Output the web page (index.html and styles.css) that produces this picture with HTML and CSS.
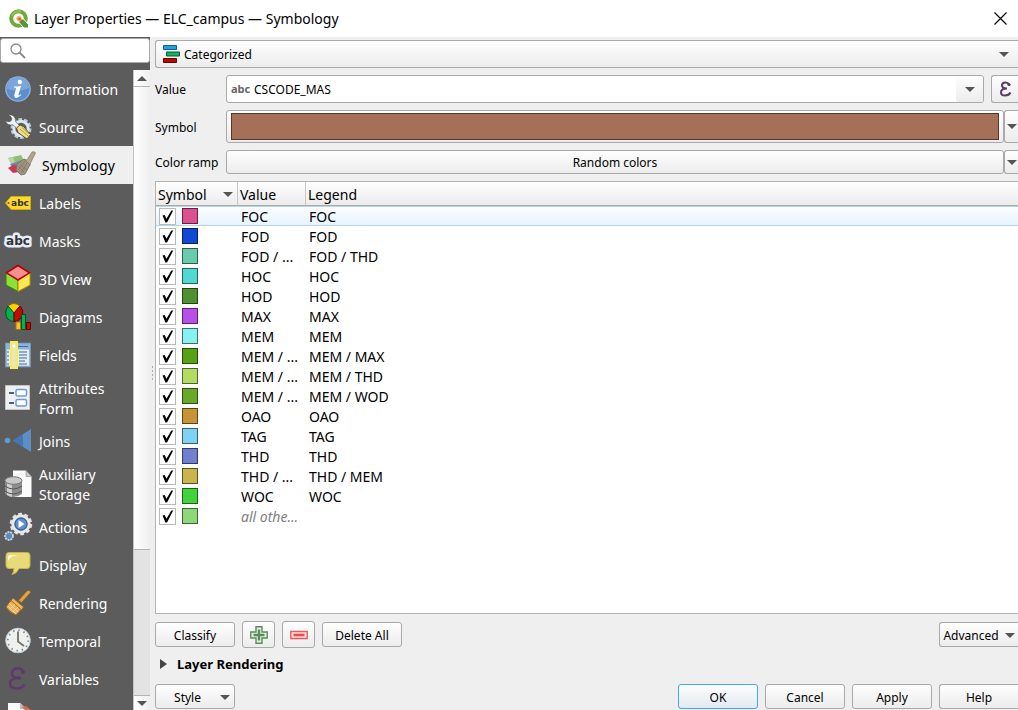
FILE: index.html
```html
<!DOCTYPE html>
<html lang="en">
<head>
<meta charset="utf-8">
<title>Layer Properties — ELC_campus — Symbology</title>
<link rel="stylesheet" href="styles.css">
</head>
<body class="dialog">
<header class="titlebar">
  <svg class="logo" viewBox="0 0 20 20" width="20" height="20" aria-hidden="true">
    <circle cx="9.500" cy="9.500" r="7.300" fill="none" stroke="#74a83c" stroke-width="4"/>
    <path d="M3 7A7.300 7.300 0 0 1 12 2.500" fill="none" stroke="#93c254" stroke-width="2"/>
    <path d="M10 10h4.500l5 5.500v3.500h-4.500L10 13.500z" fill="#589632" stroke="#fff"/>
    <circle cx="10" cy="9.500" r="2.600" fill="#f5a968"/><circle cx="10.500" cy="10" r="1.300" fill="#e8541c"/>
  </svg>
  <h1 class="title">Layer Properties — ELC_campus — Symbology</h1>
  <button class="close" aria-label="Close"><svg viewBox="0 0 13 13" width="13" height="13"><path d="M.5.5l12 12M12.500.5l-12 12" stroke="#000" stroke-width="1.200"/></svg></button>
</header>
<div class="content">
  <aside class="sidebar">
    <label class="search">
      <svg viewBox="0 0 16 16" width="16" height="16" aria-hidden="true"><circle cx="6" cy="6" r="5" fill="none" stroke="#888" stroke-width="1.300"/><path d="M9.500 9.500l5.500 5.500" stroke="#888" stroke-width="1.800"/></svg>
      <input type="text" aria-label="Search">
    </label>
    <div class="pages">
      <nav class="nav">
        <a class="item" href="#information"><svg class="icon" viewBox="0 0 26 26"><circle cx="13" cy="13" r="12.800" fill="#8db3e0"/><circle cx="13" cy="13" r="11.500" fill="#5b8fce"/><path d="M2 13a11 11 0 0 1 22-1q-10 5-22 1" fill="#7ba6da"/><circle cx="14.800" cy="6" r="2.200" fill="#fff"/><path d="M9 10.500q3.500.3 7-.8l-2.500 9q-.3 1.600 2.200-.5l.6.8q-6 5.500-7.200.8l2-7.300q.2-1-2.100-1z" fill="#fff"/></svg><span>Information</span></a>
        <a class="item" href="#source"><svg class="icon" viewBox="0 0 26 26"><circle cx="16" cy="14.500" r="9" fill="none" stroke="#b4cbe4" stroke-width="3" stroke-dasharray="3.600 2.050"/><circle cx="16" cy="14.500" r="7.200" fill="#5c5c5c" stroke="#dbe7f3" stroke-width="3"/><path d="M3 .8Q10.500-.3 10.800 8l5.200 5-2.800 2.800L8 10.800Q2 12 .3 6.500q2.200 1.700 4.700 1 2-.8 1.800-3Q6 2 3 .8z" fill="#f3f3f3" stroke="#4c4c4c" stroke-width=".6"/><path d="M11.500 14l3.500-3 3.500 1.500 7 8-3.500 4.500-9-6.500z" fill="#f0dc86" stroke="#5e5128"/><path d="M15 15l8 7M17 13.500l7 6.500" stroke="#b39a47"/></svg><span>Source</span></a>
        <a class="item selected" href="#symbology" aria-current="page"><svg class="icon" viewBox="0 0 26 26"><path d="M0 6l13-3 4 7-12 4z" fill="#8cc076"/><path d="M0 6l5-1 3 8-4 1z" fill="#b0d8a0"/><path d="M2 12l12-4 2 6-10 5z" fill="#7d87b4"/><path d="M0 16l7-4 4 8-6 1z" fill="#cb3a55"/><path d="M9 12l7-5 6 6-5 9-4 1-5-5z" fill="#9f9480" stroke="#736a58" stroke-width=".8"/><path d="M10 14l6 6M12 12l7 6M10 18l7-9M13 21l6-10" stroke="#766c59" stroke-width=".6"/><path d="M16 7l3 1 5-8q3-1 3.500 1L23 10l-1 3z" fill="#b3a58b" stroke="#857963" stroke-width=".7"/></svg><span>Symbology</span></a>
        <a class="item" href="#labels"><svg class="icon" viewBox="0 0 26 26"><path d="M6 6.500h19.500v13H6L.5 13z" fill="#fcd92b" stroke="#d2aa0a"/><circle cx="3.500" cy="13" r="1" fill="#6c5a0c"/><text class="abc" x="15" y="16" font-size="9">abc</text></svg><span>Labels</span></a>
        <a class="item" href="#masks"><svg class="icon" viewBox="0 0 26 26"><text class="abc halo" x="13" y="17" font-size="12">abc</text></svg><span>Masks</span></a>
        <a class="item" href="#view3d"><svg class="icon" viewBox="0 0 26 26"><path d="M1 7l12 6v12.500L1 19z" fill="#8ae234" stroke="#3a7d0b"/><path d="M25 7l-12 6v12.500L25 19z" fill="#fce94f" stroke="#b29500"/><path d="M13-.5l11.500 7.300L13 14 1.500 6.800z" fill="#f69090" stroke="#b60000" stroke-width="1.500"/></svg><span>3D View</span></a>
        <a class="item" href="#diagrams"><svg class="icon" viewBox="0 0 26 26"><path d="M9 9L3 2Q9-3 15 2z" fill="#fcd000" stroke="#9a7100"/><path d="M9 9v8.500Q1 17 .7 9 1 5 3 2z" fill="#00b050" stroke="#00502a"/><path d="M9 9l6-7q5 6 1 12-3 3.500-7 3.500z" fill="#c00d00" stroke="#680000"/><path d="M11 18h4.500v7.500H11z" fill="#fcc22b" stroke="#a67300"/><path d="M16.500 10.500h4v15h-4z" fill="#00b258" stroke="#00502a"/><path d="M21.500 18.500h4v7h-4z" fill="#c00d00" stroke="#680000"/></svg><span>Diagrams</span></a>
        <a class="item" href="#fields"><svg class="icon" viewBox="0 0 26 26"><path d="M1 1.500h24v23H1z" fill="#e4edf5" stroke="#7fa5ca" stroke-width="1.500"/><path d="M1 2h24v5.500H1z" fill="#8bb4dc"/><path d="M13 4.500h10" stroke="#3e6fa4"/><path d="M2 10h2M2 14h2M2 18h2M2 22h2M14 10h8M14 13h8M14 16h8M14 19h6M14 22h8" stroke="#7896b5" stroke-width="1.400"/><path d="M6 0h6v26H6z" fill="#ebe5b8" stroke="#f7ee55" stroke-width="2"/><circle cx="9" cy="4" r="1.500" fill="#fff"/></svg><span>Fields</span></a>
        <a class="item tall" href="#form"><svg class="icon" viewBox="0 0 26 26"><path d="M.5.5h24v24H.5z" fill="#f0f0f0" stroke="#c4c4c4"/><rect x="11" y="4.500" width="10.500" height="6.500" rx="1.500" fill="#fff" stroke="#6d9cd2" stroke-width="1.500"/><rect x="11" y="14.500" width="10.500" height="6.500" rx="1.500" fill="#fff" stroke="#6d9cd2" stroke-width="1.500"/><path d="M4 8h5M4 18h5" stroke="#45607e" stroke-width="2"/></svg><span>Attributes Form</span></a>
        <a class="item" href="#joins"><svg class="icon" viewBox="0 0 26 26"><path d="M8 12.500L26 1v23z" fill="#5d8fc6"/><path d="M8 12.500L18 6v13z" fill="#4377af"/><circle cx="2.500" cy="12.500" r="2.800" fill="#6398d0"/></svg><span>Joins</span></a>
        <a class="item tall" href="#storage"><svg class="icon" viewBox="0 0 26 26"><path d="M8-.5h13l5.500 6V26H8z" fill="#fafafa"/><path d="M21-.5v6h5.500z" fill="#ccc" stroke="#777" stroke-width=".5"/><path d="M0 10v13q8 6 17 0V10z" fill="#8d8d8d"/><path d="M2 11v13q3 2 5 2V11z" fill="#d0d0d0"/><ellipse cx="8.500" cy="9.500" rx="8.500" ry="3.800" fill="#c8c8c8" stroke="#757575"/><path d="M0 15q8 6 17 0M0 20q8 6 17 0" fill="none" stroke="#555"/></svg><span>Auxiliary Storage</span></a>
        <a class="item" href="#actions"><svg class="icon" viewBox="0 0 26 26"><circle cx="16" cy="10" r="9.500" fill="none" stroke="#e2e2e2" stroke-width="3.500" stroke-dasharray="3.600 2.370"/><circle cx="16" cy="10" r="8.200" fill="#5b8cc3" stroke="#e8e8e8" stroke-width="3"/><circle cx="16" cy="10" r="6" fill="#5b90cd" stroke="#31587f"/><path d="M13.500 6l6 4-6 4z" fill="#fff"/><circle cx="4" cy="22" r="4" fill="#5b8cc3" stroke="#ccd5df" stroke-width="1.800" stroke-dasharray="2 .8"/></svg><span>Actions</span></a>
        <a class="item" href="#display"><svg class="icon" viewBox="0 0 26 26"><path d="M4 .5h18q3 0 3 3v10q0 3-3 3h-8q-2 5-7 6 2-3 2-6H4q-3 0-3-3v-10q0-3 3-3z" fill="#e8da79" stroke="#c5b442"/><path d="M3 9V5q0-2 3-2h7Q5 4 3 9z" fill="#fffbe0"/></svg><span>Display</span></a>
        <a class="item" href="#rendering"><svg class="icon" viewBox="0 0 26 26"><path d="M13.500 10.500L22 1q3-1.500 3.500 1.500l-9 10z" fill="#e8a23d" stroke="#9c6014" stroke-width=".7"/><path d="M8 8l10.500 9-2 3L6 11z" fill="#f1b456" stroke="#9c6014" stroke-width=".7"/><path d="M6 10.500l10 9-5 5.500Q4 22 1 17z" fill="#e9b25f" stroke="#a56b1e"/><path d="M4 13l9 9M3 16l8 8M5 19l5-5M8 22l5-5" stroke="#ffe0a0" stroke-width=".8"/></svg><span>Rendering</span></a>
        <a class="item" href="#temporal"><svg class="icon" viewBox="0 0 26 26"><circle cx="13" cy="12.500" r="12.300" fill="#f0f1ed" stroke="#c9ccca"/><circle cx="13" cy="12.500" r="10.200" fill="none" stroke="#6a91b8" stroke-width="1.800" stroke-dasharray="1.500 3.840"/><path d="M13 3.500v10l6 4.500" fill="none" stroke="#6e716c" stroke-width="1.800"/></svg><span>Temporal</span></a>
        <a class="item" href="#variables"><svg class="icon" viewBox="0 0 26 26"><path d="M18.500 6Q17 2.500 13 2.500q-6 0-6 4.700Q7 12 14.500 12 5 12 5 17.500q0 5 7 5 5 0 7.500-4" fill="none" stroke="#5d3a6c" stroke-width="2.400"/><circle cx="18" cy="6" r="2" fill="#5d3a6c"/><circle cx="14.500" cy="12" r="1.700" fill="#5d3a6c"/></svg><span>Variables</span></a>
        <a class="item" href="#metadata" aria-label="Metadata"><svg class="icon" viewBox="0 0 26 26"><path d="M3-1h12l7 7v20H3z" fill="#fafafa"/><path d="M15-1v6h7z" fill="#bbb"/><path d="M17 3l4-1 5 4-3 3z" fill="#d96c42"/></svg></a>
      </nav>
      <div class="scrollbar" aria-hidden="true"><span class="step up"></span><span class="thumb"></span><span class="track"></span><span class="step down"></span></div>
    </div>
  </aside>
  <div class="splitter" aria-hidden="true"></div>
  <main class="main">
    <div class="box renderer edge">
      <svg viewBox="0 0 17 18" width="17" height="18" aria-hidden="true"><path d="M.5.5h13v4H.5z" fill="#1ba6d4" stroke="#1254a8"/><path d="M3.500 7h13v4h-13z" fill="#10b466" stroke="#075b34"/><path d="M.5 13.500h13v4H.5z" fill="#b60c00" stroke="#690000"/></svg>
      <select aria-label="Renderer"><option>Categorized</option></select><span class="arrow"></span>
    </div>
    <div class="row">
      <label class="name" for="value">Value</label>
      <div class="box white"><span class="type">abc</span><select id="value"><option>CSCODE_MAS</option></select><span class="drop"><span class="arrow"></span></span></div>
      <button class="box expression edge" aria-label="Expression"><svg viewBox="0 0 13 16" width="13" height="16"><path d="M10 3.500Q9 1.500 6.500 1.500 3 1.500 3 4.300 3 7.500 8 7.500 2 7.500 2 11.200 2 14.500 6 14.500q4 0 5.500-3" fill="none" stroke="#5d3a6c" stroke-width="2"/><circle cx="10" cy="3.500" r="1.600" fill="#5d3a6c"/></svg></button>
    </div>
    <div class="row">
      <span class="name">Symbol</span>
      <button class="box symbol" aria-label="Symbol"><span class="fill"></span></button><button class="box menu edge" aria-label="Symbol menu"><span class="arrow"></span></button>
    </div>
    <div class="row">
      <span class="name">Color ramp</span>
      <button class="box ramp">Random colors</button><button class="box menu edge" aria-label="Color ramp menu"><span class="arrow"></span></button>
    </div>
    <div class="list">
      <table class="classes">
        <thead><tr><th class="c1"><span class="sort">Symbol<span class="arrow"></span></span></th><th class="c2">Value</th><th>Legend</th></tr></thead>
        <tbody>
          <tr class="current"><td><span class="mark"><input type="checkbox" checked aria-label="FOC"><i style="background:#dc5090"></i></span></td><td>FOC</td><td>FOC</td></tr>
          <tr><td><span class="mark"><input type="checkbox" checked aria-label="FOD"><i style="background:#0f49d4"></i></span></td><td>FOD</td><td>FOD</td></tr>
          <tr><td><span class="mark"><input type="checkbox" checked aria-label="FOD / THD"><i style="background:#68ccac"></i></span></td><td>FOD / ...</td><td>FOD / THD</td></tr>
          <tr><td><span class="mark"><input type="checkbox" checked aria-label="HOC"><i style="background:#52d8d2"></i></span></td><td>HOC</td><td>HOC</td></tr>
          <tr><td><span class="mark"><input type="checkbox" checked aria-label="HOD"><i style="background:#4f9130"></i></span></td><td>HOD</td><td>HOD</td></tr>
          <tr><td><span class="mark"><input type="checkbox" checked aria-label="MAX"><i style="background:#b850e8"></i></span></td><td>MAX</td><td>MAX</td></tr>
          <tr><td><span class="mark"><input type="checkbox" checked aria-label="MEM"><i style="background:#87f2f2"></i></span></td><td>MEM</td><td>MEM</td></tr>
          <tr><td><span class="mark"><input type="checkbox" checked aria-label="MEM / MAX"><i style="background:#55a218"></i></span></td><td>MEM / ...</td><td>MEM / MAX</td></tr>
          <tr><td><span class="mark"><input type="checkbox" checked aria-label="MEM / THD"><i style="background:#b2dc62"></i></span></td><td>MEM / ...</td><td>MEM / THD</td></tr>
          <tr><td><span class="mark"><input type="checkbox" checked aria-label="MEM / WOD"><i style="background:#69a928"></i></span></td><td>MEM / ...</td><td>MEM / WOD</td></tr>
          <tr><td><span class="mark"><input type="checkbox" checked aria-label="OAO"><i style="background:#c79436"></i></span></td><td>OAO</td><td>OAO</td></tr>
          <tr><td><span class="mark"><input type="checkbox" checked aria-label="TAG"><i style="background:#7ed3f5"></i></span></td><td>TAG</td><td>TAG</td></tr>
          <tr><td><span class="mark"><input type="checkbox" checked aria-label="THD"><i style="background:#727fd0"></i></span></td><td>THD</td><td>THD</td></tr>
          <tr><td><span class="mark"><input type="checkbox" checked aria-label="THD / MEM"><i style="background:#c9b44e"></i></span></td><td>THD / ...</td><td>THD / MEM</td></tr>
          <tr><td><span class="mark"><input type="checkbox" checked aria-label="WOC"><i style="background:#41d43a"></i></span></td><td>WOC</td><td>WOC</td></tr>
          <tr><td><span class="mark"><input type="checkbox" checked aria-label="All other values"><i style="background:#8dd97a"></i></span></td><td class="other">all othe...</td><td></td></tr>
        </tbody>
      </table>
    </div>
    <div class="tools">
      <button class="box button">Classify</button>
      <button class="box square" aria-label="Add"><svg viewBox="0 0 18 18" width="18" height="18"><path d="M6 .8h6V6h5.200v6H12v5.200H6V12H.8V6H6z" fill="#e6f1e6" stroke="#5b8c5a" stroke-width="1.400"/><path d="M9 3.500v11M3.500 9h11" stroke="#5b8c5a" stroke-width="2.400"/></svg></button>
      <button class="box square" aria-label="Delete"><svg viewBox="0 0 18 18" width="18" height="18"><path d="M.8 5.500h16.400v7H.8z" fill="#fde4e4" stroke="#ef5a5a" stroke-width="1.400"/><path d="M3.500 9h11" stroke="#ef4a4a" stroke-width="2.600"/></svg></button>
      <button class="box button">Delete All</button>
      <button class="box button advanced edge">Advanced<span class="arrow"></span></button>
    </div>
    <button class="group" aria-expanded="false"><span class="closed"></span>Layer Rendering</button>
    <footer class="footer">
      <button class="box button style">Style<span class="arrow"></span></button>
      <button class="box button ok">OK</button>
      <button class="box button">Cancel</button>
      <button class="box button">Apply</button>
      <button class="box button help edge">Help</button>
    </footer>
  </main>
</div>
</body>
</html>
```
FILE: styles.css
```css
* { box-sizing: border-box; }

.dialog {
  margin: 0;
  height: 100vh;
  display: flex;
  flex-direction: column;
  overflow: hidden;
  background: #efefef;
  color: #000;
  font: 12px/16px "Noto Sans", sans-serif;
}

button, select, input { font: inherit; color: inherit; }
svg { display: block; flex: none; }

.titlebar {
  flex: none;
  height: 37px;
  display: flex;
  align-items: center;
  gap: 5px;
  padding: 0 11px 0 9px;
  background: #fff;
}
.title { margin: 0; font-size: 14px; font-weight: 400; line-height: 20px; }
.close { margin-left: auto; padding: 0; border: 0; background: none; }

.content { flex: 1; min-height: 0; display: flex; }

.sidebar {
  flex: none;
  width: 150px;
  display: flex;
  flex-direction: column;
  padding-top: 1px;
  background: #5c5c5c;
}
.search {
  flex: none;
  height: 25px;
  margin-bottom: 7px;
  display: flex;
  align-items: center;
  gap: 4px;
  padding: 0 9px;
  border: 1px solid #a9a9a9;
  border-radius: 3px;
  background: #fff;
}
.search input { flex: 1; min-width: 0; padding: 0; border: 0; outline: 0; }
.pages { flex: 1; min-height: 0; display: flex; }
.nav { flex: 1; overflow: hidden; }
.item {
  min-height: 38px;
  display: flex;
  align-items: center;
  gap: 8px;
  padding: 0 5px;
  color: #fff;
  font-size: 14px;
  line-height: 20px;
  text-decoration: none;
}
.item span { padding-top: 2px; }
.item.tall { min-height: 48px; }
.item.selected { padding-left: 8px; background: #efefef; color: #000; }
.icon { width: 26px; height: 26px; overflow: visible; }
.abc { font-family: "DejaVu Sans", sans-serif; font-weight: 700; text-anchor: middle; fill: #333; }
.halo { stroke: #e8edfb; stroke-width: 5px; stroke-linejoin: round; paint-order: stroke; }

.scrollbar { width: 17px; display: flex; flex-direction: column; border-left: 1px solid #c4c4c4; background: linear-gradient(90deg, #fff, #efefef); }
.step { flex: none; height: 17px; display: flex; align-items: center; justify-content: center; }
.step::before { content: ""; border: 5px solid transparent; }
.up { border-bottom: 1px solid #b4b4b4; }
.up::before { border-top-width: 0; border-bottom-color: #555; }
.down { height: 14px; }
.down::before { border-bottom-width: 0; border-top-color: #555; }
.thumb { flex: 463; }
.track { flex: 145; border: solid #b4b4b4; border-width: 1px 0; background: #e3e3e3; }

.splitter {
  flex: none;
  align-self: center;
  width: 5px;
  height: 17px;
  background: radial-gradient(circle, #aaa 1px, transparent 1px) 0 0 / 5px 4px;
}

.main { flex: 1; min-width: 0; display: flex; flex-direction: column; gap: 7px; padding: 3px 0 1px; }

.box {
  display: flex;
  align-items: center;
  justify-content: center;
  margin: 0;
  padding: 0;
  border: 1px solid #a9a9a9;
  border-radius: 3px;
  background: linear-gradient(#fefefe, #ececec);
}
.box.edge { border-right: 0; border-radius: 3px 0 0 3px; }
.box.white { flex: 1; height: 28px; background: #fff; }
.box select { flex: 1; min-width: 0; align-self: stretch; padding: 2px 0 0; border: 0; outline: 0; appearance: none; background: none; }
.arrow { flex: none; border: 5px solid transparent; border-top-color: #555; border-bottom-width: 0; }

.renderer { height: 28px; gap: 4px; padding: 0 9px 0 7px; }
.row { display: flex; }
.name { flex: none; width: 71px; align-self: center; padding-top: 2px; }
.type { width: 27px; padding-left: 4px; font: 700 11px/16px "Noto Sans", sans-serif; color: #666; }
.drop { width: 27px; align-self: stretch; display: flex; align-items: center; justify-content: center; border-radius: 3px; background: linear-gradient(#fefefe, #ececec); }
.expression { width: 27px; margin-left: 7px; }
.symbol { flex: 1; height: 33px; padding: 2px 4px; }
.fill { flex: 1; align-self: stretch; border: 1px solid #523a2e; background: #a57057; }
.menu { width: 14px; }
.ramp { flex: 1; height: 24px; padding-top: 2px; }

.list { flex: 1; min-height: 0; overflow: hidden; border: 1px solid #b4b4b4; border-right: 0; background: #fff; }
.classes { width: 100%; table-layout: fixed; border-spacing: 0; font-size: 14px; line-height: 18px; }
.classes th {
  height: 24px;
  padding: 2px 2px 0;
  border-right: 1px solid #c6c6c6;
  border-bottom: 1px solid #a9a9a9;
  background: linear-gradient(#fefefe, #ececec);
  font-weight: 400;
  text-align: left;
}
.classes th:last-child { border-right: 0; }
.classes .c1 { width: 82px; padding-right: 4px; }
.classes .c2 { width: 68px; }
.sort { display: flex; align-items: center; justify-content: space-between; }
.classes td { height: 20px; padding: 2px 3px 0; border: solid transparent; border-width: 1px 0; line-height: 16px; white-space: nowrap; overflow: hidden; }
.classes td:first-child { padding-top: 0; }
.classes .current td { border-color: #b5d7ee; background: linear-gradient(#fbfdff, #e7f3fd); }
.classes .other { color: #808080; font-style: italic; }
.mark { display: flex; align-items: center; gap: 6px; }
.mark input { appearance: none; width: 17px; height: 17px; margin: 0; border: 1px solid #b9b9b9; background: #fff; }
.mark input:checked::before {
  content: "";
  display: block;
  width: 15px;
  height: 15px;
  background: #000;
  clip-path: polygon(17% 46%, 31% 44%, 43% 68%, 76% 14%, 88% 14%, 47% 94%, 36% 94%);
}
.mark i { width: 16px; height: 16px; border: 1px solid rgb(0 0 0 / 55%); }

.tools { display: flex; align-items: center; gap: 7px; }
.button { width: 80px; height: 25px; padding-top: 2px; }
.square { width: 33px; height: 27px; }
.advanced { width: 79px; margin-left: auto; gap: 6px; }
.group { align-self: flex-start; display: flex; align-items: center; gap: 10px; margin-bottom: 4px; padding: 0 5px; border: 0; background: none; font-weight: 700; font-size: 13px; line-height: 18px; }
.closed { border: 5px solid transparent; border-left: 7px solid #444; border-right-width: 0; }
.footer { display: flex; gap: 7px; }
.style { margin-right: auto; gap: 19px; padding-left: 14px; }
.ok { border-color: #42a6f5; background: linear-gradient(#fdfefe, #e2e9ef); }
.help { width: 79px; }
```
